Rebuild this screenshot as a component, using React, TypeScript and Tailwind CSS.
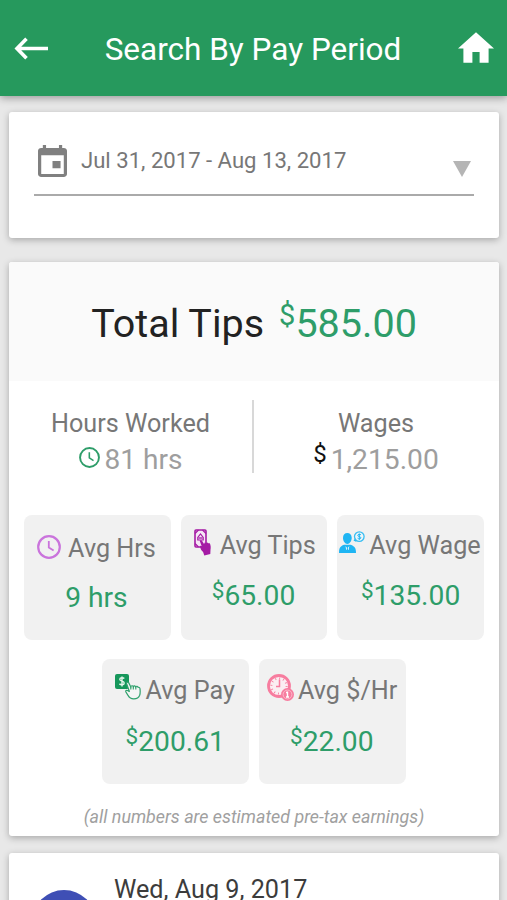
import type { ReactNode } from "react";

export default function App() {
  return (
    <div className="flex h-[900px] w-[507px] flex-col overflow-hidden bg-[#e8e8e8] font-[Roboto,sans-serif]">
      <Header />
      <main className="flex flex-col px-[9px] pr-2 pt-4">
        <PeriodPicker />
        <Summary />
        <DayCard />
      </main>
    </div>
  );
}

const Header = () => {
  return (
    <header className="z-10 flex h-24 shrink-0 items-center justify-between bg-[#26995d] pl-[14px] pr-[13px] text-white shadow-[0_2px_8px_rgba(0,0,0,0.35)]">
      <svg className="mt-px h-6 w-[34px]" viewBox="0 0 34 24" fill="none" stroke="currentColor" strokeWidth="3.6">
        <path d="M12.5 1.8 3 11.5l9.5 9.7M3 11.5h31" />
      </svg>
      <h1 className="mt-[3px] text-[31.5px] leading-10 whitespace-nowrap">Search By Pay Period</h1>
      <svg className="-mt-px h-[31px] w-9" viewBox="2 3 20 17" fill="currentColor">
        <path d="M10 20v-6h4v6h5v-8h3L12 3 2 12h3v8z" />
      </svg>
    </header>
  );
};

const PeriodPicker = () => {
  return (
    <section className="h-[126px] shrink-0 rounded-[3px] bg-white px-[25px] pt-8 shadow-[0_2px_7px_rgba(0,0,0,0.28)]">
      <div className="flex h-[52px] items-start border-b-2 border-[#aaa] pl-1 pr-[3px]">
        <svg className="mt-px h-8 w-[29px]" viewBox="3 1 18 22" preserveAspectRatio="none" fill="#808080">
          <path d="M17 12h-5v5h5v-5zM16 1v2H8V1H6v2H5c-1.11 0-1.99.9-1.99 2L3 21c0 1.1.89 2 2 2h14c1.1 0 2-.9 2-2V5c0-1.1-.9-2-2-2h-1V1h-2zm3 20H5V8h14v13z" />
        </svg>
        <span className="ml-[14px] text-[22.1px] leading-8 whitespace-nowrap text-[#777]">
          Jul 31, 2017 - Aug 13, 2017
        </span>
        <svg className="mt-[17px] ml-auto h-4 w-[18px]" viewBox="0 0 18 16" fill="#b5b5b5">
          <path d="M0 0h18L9 16z" />
        </svg>
      </div>
    </section>
  );
};

const Summary = () => {
  return (
    <section className="mt-6 flex h-[574px] shrink-0 flex-col rounded-[3px] bg-white shadow-[0_2px_7px_rgba(0,0,0,0.28)]">
      <div className="flex h-[119px] items-center justify-center gap-[15px] rounded-t-[3px] bg-[#fafafa] pt-1 text-[39.5px] whitespace-nowrap">
        <span className="text-[#222]">Total Tips</span>
        <span className="flex text-[#2e9d69]">
          <span className="text-[29px]">$</span>585.00
        </span>
      </div>
      <div className="mt-[19px] flex h-[73px]">
        <div className="flex w-[243px] flex-col items-center">
          <span className="mt-[9px] text-[25.2px] leading-[30px] text-[#777]">Hours Worked</span>
          <div className="flex items-start gap-[5px]">
            <ClockIcon className="mt-2 size-[21px] text-[#2e9d69]" />
            <span className="mt-[2px] text-[28px] leading-[38px] text-[#9e9e9e]">81 hrs</span>
          </div>
        </div>
        <div className="w-0.5 bg-[#d8d8d8]" />
        <div className="flex w-[244px] flex-col items-center">
          <span className="mt-[9px] text-[25.2px] leading-[30px] text-[#777]">Wages</span>
          <div className="flex items-start gap-1">
            <span className="-mt-px text-[24px] leading-8 text-[#111]">$</span>
            <span className="mt-[2px] text-[28.2px] leading-[38px] text-[#9e9e9e]">1,215.00</span>
          </div>
        </div>
      </div>
      <div className="mt-[42px] flex flex-wrap justify-center gap-x-[10px] gap-y-[19px] px-[14px]">
        <Tile
          icon={<ClockIcon className="mt-[3px] mr-[7px] size-6 text-[#ca74dc]" />}
          label="Avg Hrs"
          head="pl-[13px] pt-[5px]"
          value="9 hrs"
          valueClass="pr-[2px] pt-[3px]"
        />
        <Tile
          icon={<TipIcon />}
          label="Avg Tips"
          head="pl-[13px] pt-[2px]"
          value="65.00"
          money
          valueClass="pr-[1px] pt-[1px]"
        />
        <Tile icon={<WageIcon />} label="Avg Wage" head="pl-[2px] pt-[2px]" value="135.00" money valueClass="pt-[1px]" />
        <Tile icon={<PayIcon />} label="Avg Pay" head="pl-[13px] pt-[3px]" value="200.61" money valueClass="pt-[3px] pr-[1px]" />
        <Tile icon={<HourlyIcon />} label="Avg $/Hr" head="pl-[8px] pt-[3px]" value="22.00" money valueClass="pt-[3px] pr-[1px]" />
      </div>
      <p className="mt-[21px] text-center text-[17.85px] leading-6 text-[#a0a0a0] italic">
        (all numbers are estimated pre-tax earnings)
      </p>
    </section>
  );
};

type TileProps = {
  icon: ReactNode;
  label: string;
  head: string;
  value: string;
  valueClass: string;
  money?: boolean;
};

const Tile = ({ icon, label, head, value, valueClass, money }: TileProps) => {
  return (
    <div className="flex h-[125px] w-[146.6px] flex-col rounded-lg bg-[#f1f1f1] pt-[12px]">
      <div className={`flex h-[48px] items-start whitespace-nowrap ${head}`}>
        {icon}
        <span className="text-[25.2px] leading-[34px] text-[#777]">{label}</span>
      </div>
      <div className={`flex items-start justify-center text-[28.2px] leading-10 text-[#2e9d69] ${valueClass}`}>
        {money && <span className="-mt-[6px] text-[22.5px]">$</span>}
        {value}
      </div>
    </div>
  );
};

const DayCard = () => {
  return (
    <section className="mt-[17px] flex h-40 shrink-0 rounded-[3px] bg-white pl-[23px] shadow-[0_2px_7px_rgba(0,0,0,0.28)]">
      <div className="mt-[37px] size-16 rounded-full bg-[#3f4fb5]" />
      <span className="mt-[22px] ml-[18px] text-[25.2px] leading-[30px] text-[#3c3c3c]">Wed, Aug 9, 2017</span>
    </section>
  );
};

const ClockIcon = ({ className }: { className: string }) => (
  <svg className={className} viewBox="0 0 24 24" fill="none" stroke="currentColor" strokeWidth="2.2">
    <circle cx="12" cy="12" r="10.8" />
    <path d="M11.8 6v6.4l4.8 3.1" strokeWidth="1.8" />
  </svg>
);

// banknote held by a pointing hand
const TipIcon = () => (
  <svg className="mr-[9px] h-[27px] w-[17px]" viewBox="0 0 17 27">
    <rect x="1" y="1" width="11" height="17" rx="1" fill="#f6e6f6" stroke="#a51ca5" strokeWidth="1.6" />
    <path d="M1 4.5 4.5 1M8.5 1 12 4.5M1 14.5 4.5 18" stroke="#a51ca5" strokeWidth="1.2" />
    <path d="M3.8 11V8.500l2.700-3.500 2.700 3.500V11z" fill="none" stroke="#a51ca5" strokeWidth="1.2" />
    <path d="M4.500 9h4" stroke="#a51ca5" strokeWidth="1.3" />
    <path
      d="M5.700 11.800c1-.9 2.200-.3 2.800.8l1.500 2.500.8-1.700 1.500.5.600-.6 1.400 1 1.500-.1c.9 1.800 1.200 4 .7 6.500l-.2 4.400-6 1.500-1.200-3.700c-1.500-1-2.500-2.700-3-5-.2-1 .6-1.500 1.200-.8l.4.2z"
      fill="#a51ca5"
    />
  </svg>
);

const WageIcon = () => (
  <svg className="mt-[2px] mr-[4px] h-[23px] w-[26px]" viewBox="0 0 26 23">
    <g fill="#1fb5f3">
      <path d="M4 6.800C4 3.600 5.800 2 8.300 2s4.400 1.600 4.400 4.800c0 3.300-2 6.200-4.400 6.200S4 10.100 4 6.800z" />
      <path d="M0 22c0-5 1.200-7 5-8.300h6.600C15.600 15 17 17 17 22z" />
      <path d="m16.500 7 1 4-3-1.500z" />
    </g>
    <path d="m6.500 15 1.900 2.200 1.900-2.200-.6 4H7.200z" fill="#e2f5fc" />
    <path d="m8.400 15.500 1 4.500h-2z" fill="#1fb5f3" />
    <circle cx="20.300" cy="5.600" r="4.800" fill="#edf6f9" stroke="#39bdf2" strokeWidth="1.300" />
    <path d="M22 3.900c-1-1-3.300-.7-3.200.6.100 1.400 3.100.8 3.100 2.300 0 1.300-2.300 1.300-3.300.4M20.300 2.500v6.400" fill="none" stroke="#1fb5f3" />
  </svg>
);

const PayIcon = () => (
  <svg className="mr-[4px] size-[26px]" viewBox="0 0 26 26">
    <rect width="14" height="15" rx="2" fill="#16975b" />
    <path d="M9.300 4.600C8 3.200 4.700 3.500 4.800 5.500c.1 2.200 4.400 1.200 4.400 3.600 0 2-3.200 2.200-4.800.8M7 2.500v10" fill="none" stroke="#e6f5ec" strokeWidth="1.400" />
    <path
      d="M14.500 17.800 11.600 9.700c-.4-1.500 1.500-2 2.200-.8l2 4c.3-1.500 2-1.500 2.500-.2.500-1.100 2-1.100 2.500.2.600-1 2-.8 2.300.4 1.300-.3 1.800.5 1.900 1.500.2 2.400.5 4.200-.3 6.500-1 2.500-3.200 3.700-6.200 3.600-2.700 0-4.300-1.500-5.500-3.500l-2.200-3.700c-.4-1.700 1.600-2 3.700.1z"
      fill="#f5f5f5"
      stroke="#2fa06c"
      strokeWidth="1.200"
    />
    <path d="M15.800 13v2.500M18.300 13v2.500M20.800 13v2.500" stroke="#2fa06c" strokeWidth="1.100" />
  </svg>
);

const HourlyIcon = () => (
  <svg className="mr-[4px] size-[27px]" viewBox="0 0 27 27">
    <circle cx="12" cy="12" r="10.500" fill="#fbeef2" stroke="#f77d9f" strokeWidth="2.800" />
    <circle cx="12" cy="12" r="7.600" fill="none" stroke="#f77d9f" strokeWidth="2" strokeDasharray="0.900 3.080" />
    <path d="M12.500 5.500v7H9" fill="none" stroke="#f77d9f" strokeWidth="1.500" />
    <circle cx="20.500" cy="20.500" r="6.500" fill="#f77d9f" />
    <circle cx="20.500" cy="20.500" r="4.400" fill="none" stroke="#fbc5d3" strokeWidth=".8" />
    <path d="M20.500 17.500v6M19 18.500h1.500M19 23h3" stroke="#fff" strokeWidth="1.400" />
  </svg>
);
